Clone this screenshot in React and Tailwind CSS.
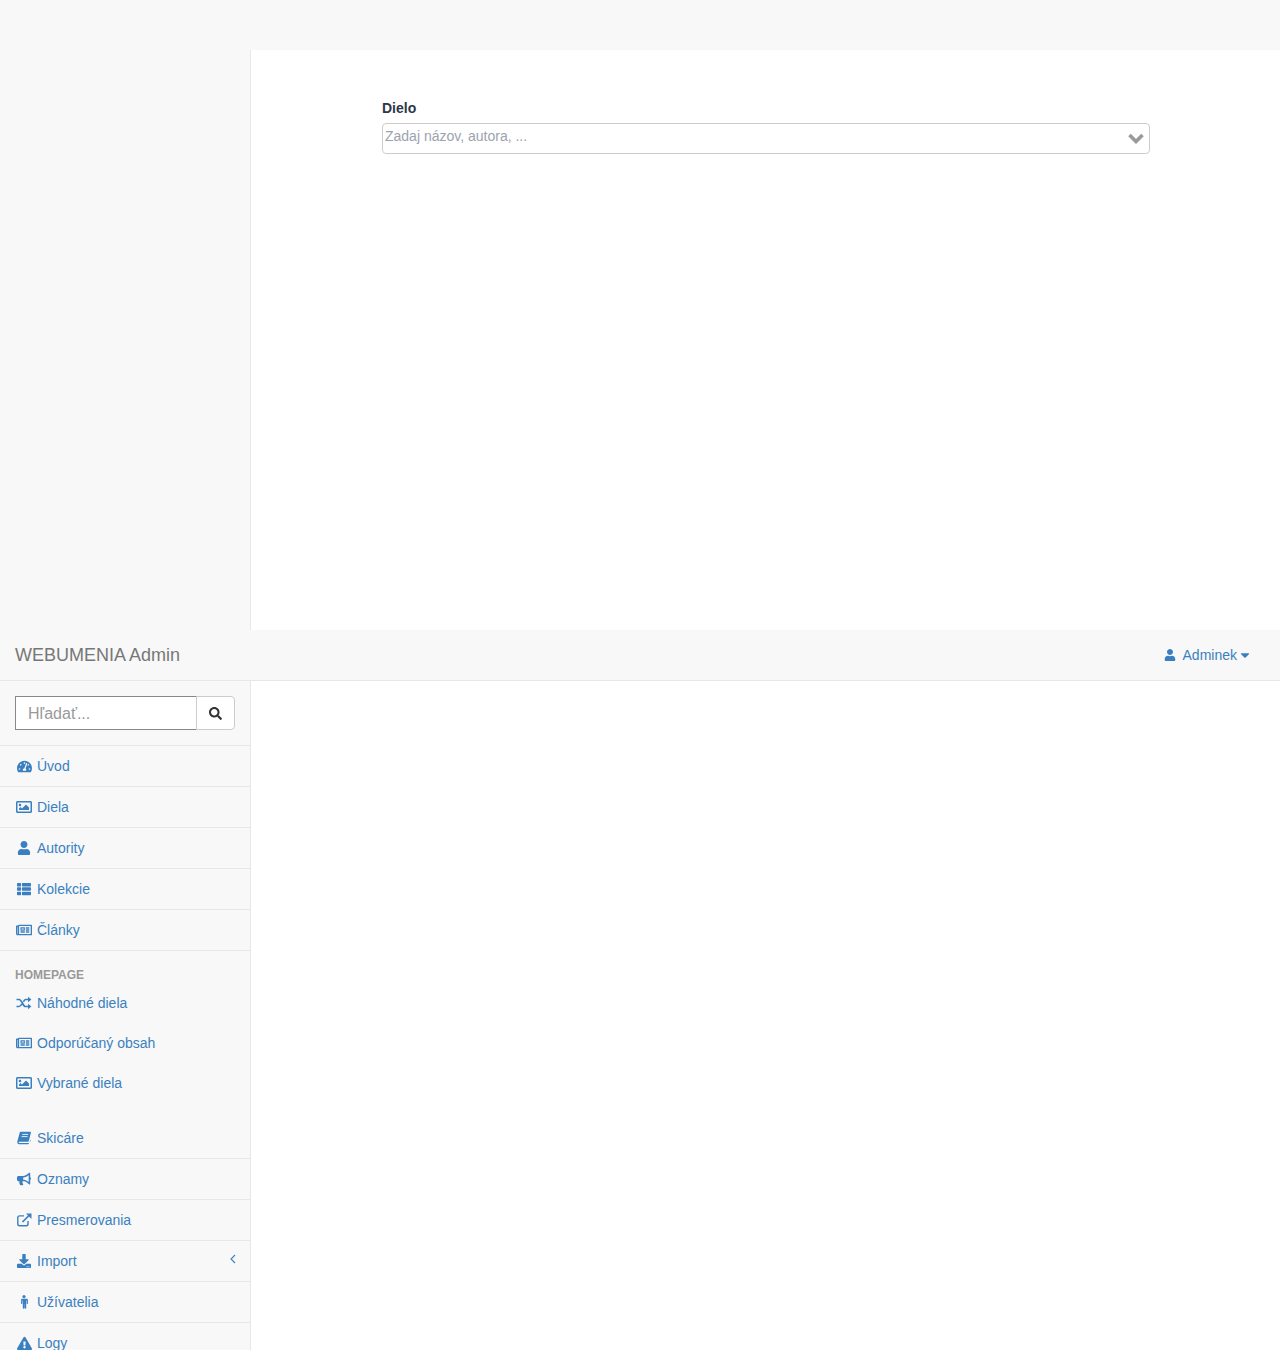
import React from "react";
import {
  FaTachometerAlt,
  FaRegImage,
  FaUser,
  FaThList,
  FaRegNewspaper,
  FaBullhorn,
  FaDownload,
  FaExclamationTriangle,
  FaSearch,
  FaCaretDown,
} from "react-icons/fa";

// Font Awesome 4 shapes that the FA5 set in react-icons draws differently
function RandomIcon() {
  return (
    <svg width="16" height="14" viewBox="0 0 16 14" fill="none" stroke="currentColor" strokeWidth="1.7">
      <path d="M0.5 3.5h2.6c2.8 0 3.6 7 6.4 7h2.5M0.5 10.5h2.6c1.2 0 2-1.2 2.6-2.5M7.4 5.8c.6-1.2 1.2-2.3 2.1-2.3h2.5" />
      <path d="M12 0.8l3.4 2.7L12 6.2zM12 7.8l3.4 2.7L12 13.2z" fill="currentColor" stroke="none" />
    </svg>
  );
}

function BookIcon() {
  return (
    <svg width="14" height="14" viewBox="0 0 14 14" fill="currentColor">
      <path d="M3.6 0.8h9.6c.6 0 .8.4.7.9l-2.1 8.2c-.1.5-.5.8-1 .8H2.4c-.5 0-.8.5-.6 1 .1.3.4.4.7.4h9.4c.3 0 .5-.2.6-.5l.7-2.6.6.4-2.3 3.5c-.1.2-.4.3-.6.3H2.2c-1 0-1.9-1-1.9-2 0-.3 0-.6.1-.9L2.6 2c.2-.7.5-1.2 1-1.2z" />
      <path d="M5.2 3.4h6M4.6 5.6h6" stroke="#f8f8f8" strokeWidth="0.9" />
    </svg>
  );
}

function ExternalIcon() {
  return (
    <svg width="15" height="14" viewBox="0 0 15 14" fill="none" stroke="currentColor" strokeWidth="1.4">
      <path d="M11 8v3c0 1.1-.7 1.8-1.8 1.8H2.6C1.5 12.8.8 12.1.8 11V4.7C.8 3.6 1.5 2.9 2.6 2.9H7" />
      <path d="M5.5 9l7.500-7.500" strokeWidth="1.7" />
      <path d="M9 0.5h5.500V6z" fill="currentColor" stroke="none" />
    </svg>
  );
}

function MaleIcon() {
  return (
    <svg width="8" height="14" viewBox="0 0 8 14" fill="currentColor">
      <circle cx="4" cy="1.6" r="1.6" />
      <path d="M1.3 3.7h5.400c.7 0 1.200.5 1.200 1.200v3.600c0 .8-1.200.8-1.200 0V5.400h-.5V13c0 1.100-1.600 1.100-1.600 0V9h-.2v4c0 1.100-1.600 1.100-1.600 0V5.400h-.5v3.100c0 .8-1.200.8-1.200 0V4.900c0-.7.500-1.200 1.200-1.200z" />
    </svg>
  );
}

function AngleLeftIcon() {
  return (
    <svg width="6" height="10" viewBox="0 0 6 10" fill="none" stroke="currentColor" strokeWidth="1.1" className="ml-auto -mt-[4px] -mr-px">
      <path d="M5 1L1 5l4 4" />
    </svg>
  );
}

const svgIcon = (Shape) => () => <Shape />;

const topItems = [
  { label: "Úvod", icon: FaTachometerAlt, size: "text-[15px]" },
  { label: "Diela", icon: FaRegImage, size: "text-[16px]" },
  { label: "Autority", icon: FaUser, size: "text-[14px]" },
  { label: "Kolekcie", icon: FaThList, size: "text-[14px]" },
  { label: "Články", icon: FaRegNewspaper, size: "text-[16px]" },
];

const homepageItems = [
  { label: "Náhodné diela", icon: svgIcon(RandomIcon) },
  { label: "Odporúčaný obsah", icon: FaRegNewspaper, size: "text-[16px]" },
  { label: "Vybrané diela", icon: FaRegImage, size: "text-[16px]" },
];

const bottomItems = [
  { label: "Skicáre", icon: svgIcon(BookIcon) },
  { label: "Oznamy", icon: FaBullhorn, size: "text-[14px]" },
  { label: "Presmerovania", icon: svgIcon(ExternalIcon) },
  { label: "Import", icon: FaDownload, size: "text-[14px]", arrow: true },
  { label: "Užívatelia", icon: svgIcon(MaleIcon) },
  { label: "Logy", icon: FaExclamationTriangle, size: "text-[15px]" },
];

function NavItem({ label, icon: Icon, size, arrow, bordered = true, height = "h-[41px]" }) {
  return (
    <a
      className={`flex items-center pl-4 pr-[15px] text-sm text-[#3a80c0] ${height} ${
        bordered ? "border-b border-[#e7e7e7]" : ""
      }`}
    >
      <span className="flex w-[16px] justify-center">
        <Icon className={size} />
      </span>
      <span className="ml-[5px]">{label}</span>
      {arrow && <AngleLeftIcon />}
    </a>
  );
}

export default function App() {
  return (
    <div className="h-[1350px] overflow-hidden bg-white font-['Liberation_Sans',Arial,sans-serif] text-sm">
      {/* first page, form with the artwork select */}
      <div className="h-[630px]">
        <div className="h-[50px] bg-[#f8f8f8]" />
        <div className="flex h-[580px]">
          <div className="w-[251px] border-r border-[#e7e7e7] bg-[#f8f8f8]" />
          <div className="flex-1 pl-[131px] pr-[130px] pt-[49px]">
            <label className="block text-sm leading-[18px] font-bold text-[#2d3748]">Dielo</label>
            <div className="relative mt-[6px] h-[31px] rounded border border-[#cccccc] bg-white pl-[2px] leading-[25px] text-[#9ca3af]">
              Zadaj názov, autora, ...
              <svg
                width="16"
                height="11"
                viewBox="0 0 16 11"
                fill="none"
                stroke="#999999"
                strokeWidth="3.6"
                className="absolute top-[9px] right-[5px]"
              >
                <path d="M1.5 2l6.500 6.500L14.500 2" />
              </svg>
            </div>
          </div>
        </div>
      </div>

      {/* navbar */}
      <div className="flex h-[51px] items-center border-b border-[#e7e7e7] bg-[#f8f8f8] pl-[15px] pr-[28px]">
        <span className="mt-[2px] text-[18px] text-[#777777]">WEBUMENIA Admin</span>
        <a className="ml-auto flex items-center text-sm text-[#3a80c0]">
          <FaUser className="text-[12px]" />
          <span className="ml-[7px]">Adminek</span>
          <FaCaretDown className="ml-px text-[14px]" />
        </a>
      </div>

      <div className="flex">
        <aside className="h-[669px] w-[251px] border-r border-[#e7e7e7] bg-[#f8f8f8]">
          <div className="flex h-[65px] border-b border-[#e7e7e7] px-[15px] pt-[15px]">
            <div className="flex h-[34px] w-[182px] items-center border border-[#888888] bg-white pl-3 pt-[2px] text-[16px] text-[#999999]">
              Hľadať...
            </div>
            <div className="-ml-px flex h-[34px] w-[39px] items-center justify-center rounded-r border border-[#cccccc] bg-white">
              <FaSearch className="text-[13px] text-[#333333]" />
            </div>
          </div>

          {topItems.map((item) => (
            <NavItem key={item.label} {...item} />
          ))}

          <div className="pl-[15px] pt-[17px] text-xs leading-[15px] font-bold text-[#999999]">HOMEPAGE</div>
          <div className="mb-[15px]">
            {homepageItems.map((item) => (
              <NavItem key={item.label} {...item} bordered={false} height="h-10" />
            ))}
          </div>

          {bottomItems.map((item) => (
            <NavItem key={item.label} {...item} />
          ))}
        </aside>
        <main className="flex-1" />
      </div>
    </div>
  );
}
